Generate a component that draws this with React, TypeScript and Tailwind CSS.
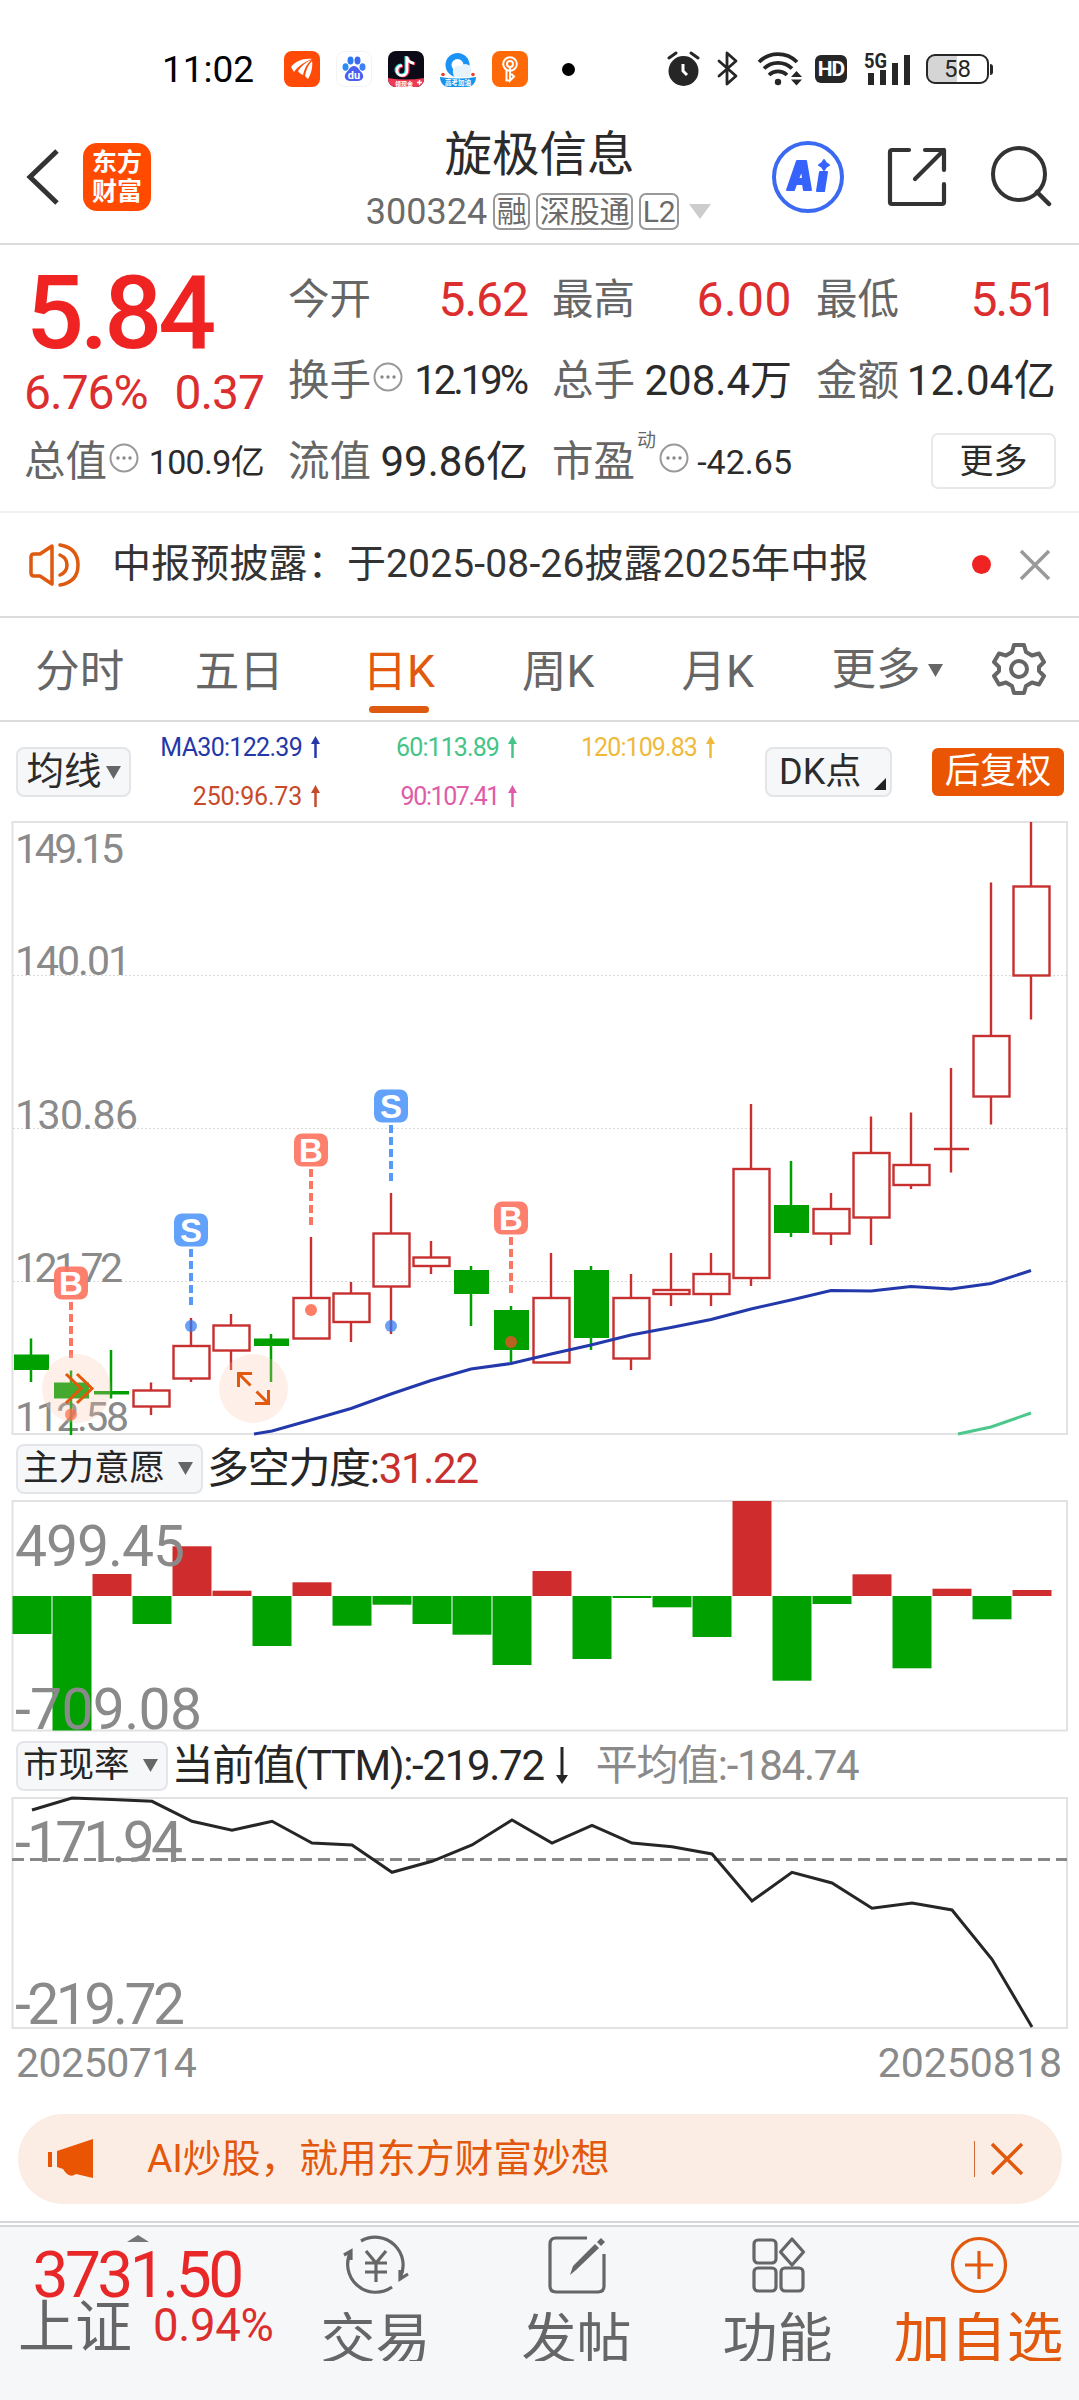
import type { ReactNode } from "react";

type Color = "r" | "g";

// [color, high, body top, body bottom, low]
type Candle = [Color, number, number, number, number];

const RED = "#c8302f";
const GREEN = "#00a000";

const candles: Candle[] = [
  ["g", 1338.5, 1354.5, 1370, 1382],
  ["g", 1370.5, 1382.5, 1398.5, 1435],
  ["g", 1350, 1391, 1394.5, 1398.5],
  ["r", 1382.5, 1390.5, 1406.5, 1415],
  ["r", 1318, 1346, 1378.5, 1382],
  ["r", 1314, 1325.5, 1350.5, 1370],
  ["g", 1334, 1338.5, 1346, 1382],
  ["r", 1237, 1298, 1338.5, 1338.5],
  ["r", 1282, 1293.5, 1322, 1342],
  ["r", 1193, 1233.5, 1286.5, 1334],
  ["r", 1241, 1257.5, 1266, 1274],
  ["g", 1266, 1270, 1294, 1326],
  ["g", 1306, 1310, 1350, 1362],
  ["r", 1253, 1298, 1362.5, 1362.5],
  ["g", 1266, 1270, 1338, 1350],
  ["r", 1274, 1298, 1358.5, 1370],
  ["r", 1253, 1290, 1294, 1306],
  ["r", 1253, 1274, 1294, 1306],
  ["r", 1104, 1169, 1278, 1286],
  ["g", 1161, 1205, 1233, 1237],
  ["r", 1193, 1209, 1233.5, 1245],
  ["r", 1116.5, 1153, 1217.5, 1245],
  ["r", 1112.5, 1165, 1185, 1189],
  ["r", 1068, 1149, 1149, 1172.5],
  ["r", 882.5, 1036, 1096.5, 1124.5],
  ["r", 822, 886.5, 975.5, 1019.5],
];

const bars: [Color, number][] = [
  ["g", 1634],
  ["g", 1730.5],
  ["r", 1574],
  ["g", 1624],
  ["r", 1546.3],
  ["r", 1590.7],
  ["g", 1646],
  ["r", 1582.3],
  ["g", 1625.7],
  ["g", 1604.7],
  ["g", 1624],
  ["g", 1634.7],
  ["g", 1665],
  ["r", 1571],
  ["g", 1659],
  ["g", 1598],
  ["g", 1607.3],
  ["g", 1637],
  ["r", 1501],
  ["g", 1680.7],
  ["g", 1604],
  ["r", 1574.3],
  ["g", 1668.3],
  ["r", 1588.7],
  ["g", 1619.3],
  ["r", 1590],
];

const ttm = [
  1810, 1798, 1799.5, 1801.3, 1821.3, 1830.3, 1821.3, 1843, 1845, 1872.3,
  1861.3, 1845, 1820, 1843, 1825.3, 1843, 1846.7, 1854, 1901, 1872.3, 1883,
  1908.3, 1903, 1910, 1959.3, 2027,
];

const ma30 =
  "254,1434 272,1431 311,1420 351,1408.5 391,1394 431,1380.5 471,1369 511,1363.5 551,1354 591,1345 631,1335 671,1327.5 711,1319.5 751,1309 791,1300 831,1290.5 871,1291 911,1286.5 951,1289 991,1283.5 1031,1270.5";

const signals = [
  { x: 71, y: 1283, type: "B", dot: 1414.5 },
  { x: 191, y: 1230, type: "S", dot: 1326 },
  { x: 311, y: 1150, type: "B", dot: 1310 },
  { x: 391, y: 1106, type: "S", dot: 1326 },
  { x: 511, y: 1218, type: "B", dot: 1342 },
];

const xAt = (i: number) => 31 + i * 40;

function AxisLabel({
  y,
  width,
  size,
  children,
}: {
  y: number;
  width: number;
  size: number;
  children: string;
}) {
  return (
    <text x="15" y={y} fontSize={size} textLength={width} fill="#8a8a8a">
      {children}
    </text>
  );
}

/* ---------- status bar ---------- */

function StatusBar() {
  return (
    <div className="flex h-[100px] items-center pl-[162px] pt-[38px]">
      <span className="w-[122px] text-[37px] leading-none text-black">11:02</span>
      <div className="flex gap-4">
        <svg width="36" height="36" viewBox="0 0 36 36">
          <rect width="36" height="36" rx="8" fill="#ff4a08" />
          <path d="M7 16C12 10 19 7 28 8c-6 2-14 7-18 13-1-2-2-3-3-5z" fill="#fff" />
          <path d="M14 20c3-5 8-9 13-11-4 4-7 9-8 15-2-1-4-2-5-4z" fill="#fff" />
          <path d="M21 25c1-6 3-11 7-15 1 6-1 13-4 18-1-1-2-2-3-3z" fill="#fff" />
        </svg>
        <svg width="36" height="36" viewBox="0 0 36 36">
          <rect x=".5" y=".5" width="35" height="35" rx="8" fill="#fff" stroke="#f3f3f3" />
          <ellipse cx="9.500" cy="16" rx="3" ry="3.800" fill="#2a8cf5" />
          <ellipse cx="14.500" cy="9.500" rx="3" ry="4" fill="#2a7af5" />
          <ellipse cx="21.500" cy="9.500" rx="3" ry="4" fill="#3f67f5" />
          <ellipse cx="26.500" cy="16" rx="3" ry="3.800" fill="#3d80f5" />
          <path d="M18 15c4 0 5 4 8 7 3 4 0 8-4 8H14c-4 0-7-4-4-8 3-3 4-7 8-7z" fill="#4a5ef0" />
          <text x="18" y="28" fontSize="11" fontWeight="700" textAnchor="middle" fill="#fff">
            du
          </text>
        </svg>
        <svg width="36" height="36" viewBox="0 0 36 36">
          <rect width="36" height="36" rx="8" fill="#0c0a16" />
          <path d="M18 5v14a5 5 0 1 1-5-5M18 6c1 4 3 5 7 6" fill="none" stroke="#28e0df" strokeWidth="3" />
          <path d="M20 6v14a5 5 0 1 1-5-5M20 7c1 4 3 5 7 6" fill="none" stroke="#f5345c" strokeWidth="3" />
          <path d="M19 5.500v14a5 5 0 1 1-5-5M19 6.500c1 4 3 5 7 6" fill="none" stroke="#fff" strokeWidth="2.600" />
          <path d="M0 27q18 3 36 0v1a8 8 0 0 1-8 8H8a8 8 0 0 1-8-8z" fill="#ee3a55" />
          <text x="16" y="34.500" fontSize="6" fontWeight="700" textAnchor="middle" fill="#fff">
            领现金
          </text>
          <path d="M31.500 29v5M29 31.500h5" stroke="#fff" strokeWidth="1.500" />
        </svg>
        <svg width="36" height="36" viewBox="0 0 36 36">
          <circle cx="17.500" cy="14" r="9" fill="none" stroke="#1b93f4" strokeWidth="6" />
          <path d="M13 22a6 6 0 0 1 8-7 6 6 0 0 1 10 6l-2 5H14z" fill="#e6f3fd" />
          <path d="M0 26q18 3 36 0c0 6-4 10-9 10H9c-5 0-9-4-9-10z" fill="#1593ec" />
          <circle cx="3" cy="23.500" r="1.800" fill="#e8412d" />
          <circle cx="33" cy="23.500" r="1.800" fill="#e8412d" />
          <text x="18" y="34" fontSize="6.500" fontWeight="700" textAnchor="middle" fill="#fff">
            高考加油
          </text>
        </svg>
        <svg width="36" height="36" viewBox="0 0 36 36">
          <rect width="36" height="36" rx="8" fill="#ff6a08" />
          <g fill="none" stroke="#fff" strokeWidth="2">
            <circle cx="18" cy="13" r="6.800" />
            <circle cx="18" cy="13" r="3" />
            <path d="M14.500 18.500V29.500h3M18 16v13.500l4-4-2-2h-2" />
          </g>
        </svg>
      </div>
      <span className="ml-[34px] size-[13px] rounded-full bg-black" />
      <div className="ml-[92px] flex items-center text-[#262626]">
        <svg width="33" height="36" viewBox="0 0 33 36">
          <circle cx="16.500" cy="20" r="15" fill="currentColor" />
          <path d="M2 7l7-5M31 7l-7-5" stroke="currentColor" strokeWidth="3" strokeLinecap="round" />
          <path d="M16 13v7l4 4" stroke="#fff" strokeWidth="3" fill="none" />
        </svg>
        <svg className="ml-[17px]" width="22" height="36" viewBox="0 0 22 36">
          <path
            d="M2 10l17 15-9 8V2l9 8L2 25"
            fill="none"
            stroke="currentColor"
            strokeWidth="2.800"
            strokeLinejoin="round"
            strokeLinecap="round"
          />
        </svg>
        <svg className="ml-[18px]" width="46" height="36" viewBox="0 0 46 36">
          <g fill="none" stroke="currentColor" strokeWidth="3.800">
            <path d="M2 11a27 27 0 0 1 38 0" />
            <path d="M7 17.500a20 20 0 0 1 28 0" />
            <path d="M12 24a13 13 0 0 1 18 0" />
          </g>
          <circle cx="21" cy="31" r="3.200" fill="currentColor" />
          <path d="M34 26l5.500-6 5.500 6zM34 28.500l5.500 6 5.500-6z" fill="currentColor" />
        </svg>
        <span className="ml-[12px] flex h-7 w-8 items-center justify-center rounded-md bg-[#262626] text-[21px] font-bold leading-none tracking-[-1px] text-white">
          HD
        </span>
        <svg className="ml-[17px]" width="48" height="36" viewBox="0 0 48 36">
          <text x="0" y="17" fontSize="20" fontWeight="700" textLength="23" lengthAdjust="spacingAndGlyphs" fill="currentColor">
            5G
          </text>
          <path d="M4 22h6v12H4zM16 19h6v15h-6zM28 12h6v22h-6zM40 4h6v30h-6z" fill="currentColor" />
        </svg>
        <div className="ml-[14px] flex items-center">
          <div className="flex h-[30px] w-[63px] items-center justify-center rounded-[9px] border-2 border-[#262626] bg-gradient-to-r from-[#d5d5d5] from-50% to-white to-50% text-[24px] leading-none">
            58
          </div>
          <span className="ml-px h-[11px] w-[3px] rounded-r bg-[#262626]" />
        </div>
      </div>
    </div>
  );
}

/* ---------- header ---------- */

function Badge({ children }: { children: string }) {
  return (
    <span className="flex h-[37px] shrink-0 items-center whitespace-nowrap rounded-[7px] border-2 border-[#999] px-[1.500px] text-[30px] leading-none">
      {children}
    </span>
  );
}

function Header() {
  return (
    <header className="flex h-[145px] items-center border-b-2 border-[#dcdcdc] pt-[11px]">
      <svg className="ml-[24px]" width="38" height="58" viewBox="0 0 38 58">
        <path d="M33 3L6 29l27 26" fill="none" stroke="#333" strokeWidth="5" />
      </svg>
      <div className="ml-[21px] flex size-[68px] flex-col items-center justify-center gap-[3px] rounded-[14px] bg-[#ff4a00] text-[25px] font-bold leading-[26px] text-white">
        <span>东方</span>
        <span>财富</span>
      </div>
      <div className="ml-[215px] flex w-[345px] flex-col items-center pt-[7px]">
        <h1 className="pl-[2px] text-[47.500px] leading-[49px] text-[#2b2b2b]">旋极信息</h1>
        <div className="mt-[13px] flex items-center gap-[6px] text-[#6b6b6b]">
          <span className="text-[36px] leading-none">300324</span>
          <Badge>融</Badge>
          <Badge>深股通</Badge>
          <Badge>L2</Badge>
          <svg className="ml-1" width="22" height="15" viewBox="0 0 22 15">
            <path d="M0 0h22L11 15z" fill="#ccc" />
          </svg>
        </div>
      </div>
      <svg className="ml-[60px]" width="74" height="74" viewBox="0 0 74 74">
        <circle cx="37" cy="37" r="34" fill="none" stroke="#3b69f2" strokeWidth="4" />
        <g fill="#3563fb" stroke="#3563fb" strokeWidth="2" strokeLinejoin="round">
          <path
            fillRule="evenodd"
            d="M16 50l10-29h9l5 29h-7l-1-6h-7l-2 6zM27 39h5l-1-10z"
          />
          <path d="M49 32h7l-3 19h-7zM53 20l2 3 3 2-3 2-2 3-2-3-3-2 3-2z" />
        </g>
      </svg>
      <svg className="ml-[42px]" width="60" height="60" viewBox="0 0 60 60">
        <path
          d="M22 3H5a2 2 0 0 0-2 2v50a2 2 0 0 0 2 2h50a2 2 0 0 0 2-2V37M38 3h19v20M57 3L28 32"
          fill="none"
          stroke="#333"
          strokeWidth="4.200"
          strokeLinecap="round"
          strokeLinejoin="round"
        />
      </svg>
      <svg className="ml-[43px]" width="62" height="62" viewBox="0 0 62 62">
        <circle cx="29" cy="28" r="26" fill="none" stroke="#333" strokeWidth="4" />
        <path d="M47 46l12 12" stroke="#333" strokeWidth="4.500" strokeLinecap="round" />
      </svg>
    </header>
  );
}

/* ---------- quote summary ---------- */

function Info() {
  return (
    <svg className="-mt-2 ml-[2px] shrink-0" width="30" height="30" viewBox="0 0 30 30">
      <circle cx="15" cy="15" r="13.500" fill="none" stroke="#999" strokeWidth="2" />
      <g fill="#888">
        <circle cx="9" cy="15" r="1.700" />
        <circle cx="15" cy="15" r="1.700" />
        <circle cx="21" cy="15" r="1.700" />
      </g>
    </svg>
  );
}

function Quote({ label, children }: { label: ReactNode; children: ReactNode }) {
  return (
    <div className="flex items-center justify-between whitespace-nowrap">
      <span className="flex items-center text-[41.5px] leading-none text-[#666]">{label}</span>
      {children}
    </div>
  );
}

function Summary() {
  return (
    <section className="grid h-[268px] grid-cols-[240px_240px_240px_240px] grid-rows-[81px_81px_81px] gap-x-[24px] border-b-2 border-[#efefef] pl-[24px] pt-[14px]">
      <div className="row-span-2 text-[#f02323]">
        <div className="pl-[2px] pt-[5px] text-[102px] font-medium leading-[98px] tracking-[-4px]">
          5.84
        </div>
        <div className="flex justify-between pt-[7px] text-[48px] leading-[48px] tracking-[-1px] text-[#dc2e2e]">
          <span>6.76%</span>
          <span>0.37</span>
        </div>
      </div>
      <Quote label="今开">
        <span className="text-[48px] leading-none tracking-[-1px] text-[#dc2e2e]">5.62</span>
      </Quote>
      <Quote label="最高">
        <span className="text-[48px] leading-none tracking-[0.500px] text-[#dc2e2e]">6.00</span>
      </Quote>
      <Quote label="最低">
        <span className="text-[48px] leading-none tracking-[-2px] text-[#dc2e2e]">5.51</span>
      </Quote>
      <Quote label={<>换手<Info /></>}>
        <span className="pr-[2px] text-[40px] leading-none tracking-[-3px] text-[#2b2b2b]">12.19%</span>
      </Quote>
      <Quote label="总手">
        <span className="text-[42px] leading-none text-[#2b2b2b]">208.4万</span>
      </Quote>
      <Quote label="金额">
        <span className="text-[42px] leading-none tracking-[0.300px] text-[#2b2b2b]">12.04亿</span>
      </Quote>
      <Quote label={<>总值<Info /></>}>
        <span className="text-[34px] leading-none tracking-[-0.700px] text-[#2b2b2b]">100.9亿</span>
      </Quote>
      <Quote label="流值">
        <span className="text-[42px] leading-none text-[#2b2b2b]">99.86亿</span>
      </Quote>
      <Quote
        label={
          <>
            市盈<span className="-mt-[42px] ml-[2px] mr-px text-[19px]">动</span>
            <Info />
          </>
        }
      >
        <span className="text-[34px] leading-none text-[#2b2b2b]">-42.65</span>
      </Quote>
      <div className="flex items-center justify-end">
        <button className="-mt-[2px] h-[56px] w-[125px] rounded-[7px] border-2 border-[#e8e8e8] text-[34px] leading-none text-[#2b2b2b]">
          更多
        </button>
      </div>
    </section>
  );
}

function Notice() {
  return (
    <div className="flex h-[105px] items-center border-b-2 border-[#dcdcdc] pl-[28px]">
      <svg width="56" height="48" viewBox="0 0 56 48" fill="none" stroke="#dd5a10" strokeWidth="3.500">
        <path d="M24 5L12 13H6q-3 0-3 3v16q0 3 3 3h6l12 8z" strokeLinejoin="round" />
        <path d="M32 14q7 3 7 10t-7 10M32 4q18 3 18 20T32 44" strokeLinecap="round" />
      </svg>
      <span className="ml-[28px] w-[860px] text-[39px] leading-none tracking-[0.150px] text-[#333]">
        中报预披露：于2025-08-26披露2025年中报
      </span>
      <span className="size-[19px] rounded-full bg-[#f02323]" />
      <svg className="ml-[28px]" width="32" height="32" viewBox="0 0 32 32">
        <path d="M2 2l28 28M30 2L2 30" stroke="#999" strokeWidth="3.500" />
      </svg>
    </div>
  );
}

/* ---------- tabs & toolbar ---------- */

const tabs = ["分时", "五日", "日K", "周K", "月K"];

function Caret() {
  return (
    <svg width="15" height="13" viewBox="0 0 15 13">
      <path d="M0 0h15L7.500 13z" fill="#666" />
    </svg>
  );
}

function Tabs() {
  return (
    <nav className="flex h-[104px] border-b-2 border-[#dcdcdc] text-[44.500px] leading-none text-[#666]">
      {tabs.map((tab) => (
        <div
          key={tab}
          className={
            tab === "日K"
              ? "flex w-[159.500px] flex-col items-center pt-[32px] text-[#e2580c]"
              : "flex w-[159.500px] flex-col items-center pt-[32px]"
          }
        >
          {tab}
          {tab === "日K" && <span className="mt-[11px] h-[7px] w-[60px] rounded-full bg-[#dd5a10]" />}
        </div>
      ))}
      <div className="ml-[34px] flex items-center gap-[7px] pt-[3px]">
        更多
        <Caret />
      </div>
      <svg className="ml-[49px] mt-[24px]" width="54" height="54" viewBox="0 0 54 54" fill="none" stroke="#666" strokeWidth="4">
        <path
          d="M22 3h10l2 7 6 3.500 7-2 5 8.500-5 5v4l5 5-5 8.500-7-2-6 3.500-2 7H22l-2-7-6-3.500-7 2L2 34l5-5v-4l-5-5 5-8.500 7 2 6-3.500z"
          strokeLinejoin="round"
        />
        <circle cx="27" cy="27" r="8" />
      </svg>
    </nav>
  );
}

function Average({ className, children }: { className: string; children: string }) {
  return (
    <span className={`flex items-center justify-end gap-[9px] ${className}`}>
      {children}
      <svg width="9" height="22" viewBox="0 0 9 22">
        <path d="M4.500 22V5" stroke="currentColor" strokeWidth="2.500" />
        <path d="M0 8L4.500 0 9 8z" fill="currentColor" />
      </svg>
    </span>
  );
}

function Toolbar() {
  return (
    <div className="flex h-[94px] pl-[16px]">
      <button className="mt-[25px] flex h-[50px] w-[115px] shrink-0 items-center justify-center gap-[4px] rounded-[8px] border-2 border-[#e3e5e9] bg-[#f6f7f9] text-[37.500px] leading-none text-[#2b2b2b]">
        均线
        <Caret />
      </button>
      <div className="ml-[-9px] mt-[12px] grid h-[74px] grid-cols-[198px_197px_198px] grid-rows-[26px_26px] content-start gap-y-[23px] text-[25px] leading-none">
        <Average className="tracking-[-0.700px] text-[#2438a8]">MA30:122.39</Average>
        <Average className="tracking-[-0.900px] text-[#45c487]">60:113.89</Average>
        <Average className="tracking-[-0.900px] text-[#efb93c]">120:109.83</Average>
        <Average className="tracking-[-0.200px] text-[#c84a2b]">250:96.73</Average>
        <Average className="tracking-[-1.400px] text-[#e05ca8]">90:107.41</Average>
      </div>
      <button className="ml-[50px] mt-[25px] flex h-[50px] w-[127px] items-end justify-between rounded-[8px] border-2 border-[#e3e5e9] bg-[#f6f7f9] pb-[5px] pl-[12px] pr-[4px] text-[36px] leading-none text-[#2b2b2b]">
        DK点
        <svg width="12" height="12" viewBox="0 0 12 12">
          <path d="M12 0v12H0z" fill="#222" />
        </svg>
      </button>
      <button className="ml-[40px] mt-[26px] h-[48px] w-[132px] rounded-[6px] bg-[#ea5504] text-[35.500px] leading-none text-white">
        后复权
      </button>
    </div>
  );
}

/* ---------- charts ---------- */

function CandleChart() {
  return (
    <svg className="block" width="1079" height="622" viewBox="0 816 1079 622">
      <rect x="12.500" y="822" width="1054.500" height="612" fill="none" stroke="#e2e2e2" strokeWidth="2" />
      {[975.5, 1128.5, 1281.5].map((y) => (
        <path key={y} d={`M13 ${y}H1067`} stroke="#d8d8d8" strokeDasharray="2 2" />
      ))}
      <AxisLabel y={863} width={109} size={41}>149.15</AxisLabel>
      <AxisLabel y={975} width={116} size={41}>140.01</AxisLabel>
      <AxisLabel y={1128.5} width={123} size={41}>130.86</AxisLabel>
      <AxisLabel y={1282} width={108} size={41}>121.72</AxisLabel>
      <AxisLabel y={1431} width={114} size={41}>112.58</AxisLabel>

      {candles.map(([color, high, top, bottom, low], i) => {
        const x = xAt(i);
        if (color === "g") {
          return (
            <g key={i} fill={GREEN}>
              <rect x={x - 1.25} y={high} width="2.500" height={low - high} />
              <rect x={x - 17} y={top} width="35" height={bottom - top} />
            </g>
          );
        }
        return (
          <g key={i} fill="none" stroke={RED} strokeWidth="2.400">
            <path d={`M${x} ${high}V${top}M${x} ${bottom}V${low}`} />
            {top === bottom ? (
              <path d={`M${x - 17} ${top}h35`} />
            ) : (
              <rect x={x - 17.5} y={top} width="36" height={bottom - top} />
            )}
          </g>
        );
      })}

      <polyline points={ma30} fill="none" stroke="#2339ab" strokeWidth="3" />
      <polyline points="958,1434 991,1427 1031,1413" fill="none" stroke="#4cc88c" strokeWidth="3" />

      {signals.map(({ x, y, type, dot }) => {
        const fill = type === "B" ? "#fd7563" : "#559afa";
        return (
          <g key={x}>
            <rect x={x - 17} y={y - 16.5} width="34" height="33" rx="8" fill={fill} fillOpacity=".92" />
            <text
              x={x}
              y={y + 12}
              fontSize="33"
              fontWeight="700"
              textAnchor="middle"
              fill="#fff"
              style={{ fontFamily: "Liberation Sans, sans-serif" }}
            >
              {type}
            </text>
            <path d={`M${x} ${y + 19}v56`} stroke={fill} strokeWidth="4" strokeDasharray="8 4" />
            <circle cx={x} cy={dot} r="6" fill={type === "B" ? "#ff4a2d" : "#2d7df5"} fillOpacity=".72" />
          </g>
        );
      })}

      <g stroke="#e2580c" strokeWidth="3" fill="none">
        <circle cx="76.500" cy="1388.500" r="34.500" fill="#fbc9ae" fillOpacity=".27" stroke="none" />
        <path d="M66 1374l15 14.500L66 1403M77 1374l15 14.500L77 1403" />
        <circle cx="253.500" cy="1388.500" r="34.500" fill="#fbc9ae" fillOpacity=".27" stroke="none" />
        <path d="M238.500 1387v-13.500H252M238.500 1373.500l12 12M268.500 1390v13.500H255M268.500 1403.500l-12-12" />
      </g>
    </svg>
  );
}

function ForceChart() {
  const zero = 1596;
  return (
    <svg className="block" width="1079" height="236" viewBox="0 1498 1079 236">
      <rect x="12.500" y="1501" width="1054.500" height="229.500" fill="none" stroke="#e2e2e2" strokeWidth="2" />
      {bars.map(([color, y], i) => (
        <rect
          key={i}
          x={12.5 + i * 40}
          y={Math.min(zero, y)}
          width="39"
          height={Math.abs(y - zero)}
          fill={color === "r" ? "#cf2d2d" : GREEN}
        />
      ))}
      <AxisLabel y={1565.5} width={170} size={57}>499.45</AxisLabel>
      <AxisLabel y={1729} width={187} size={57}>-709.08</AxisLabel>
    </svg>
  );
}

function TtmChart() {
  return (
    <svg className="block" width="1079" height="236" viewBox="0 1796 1079 236">
      <rect x="12.500" y="1798" width="1054.500" height="230" fill="none" stroke="#e2e2e2" strokeWidth="2" />
      <AxisLabel y={1862} width={168} size={57}>-171.94</AxisLabel>
      <AxisLabel y={2024} width={170} size={57}>-219.72</AxisLabel>
      <path d="M12 1859.500H1067" stroke="#888" strokeWidth="3" strokeDasharray="12 6" />
      <polyline
        points={ttm.map((y, i) => `${xAt(i) + 1},${y}`).join(" ")}
        fill="none"
        stroke="#262626"
        strokeWidth="3"
      />
    </svg>
  );
}

function IndicatorRow({ name, children }: { name: string; children: ReactNode }) {
  return (
    <div className="flex items-center whitespace-nowrap pl-[16px] pt-px text-[42px] leading-none tracking-[-1.300px] text-[#262626]">
      <button className="mr-[4px] flex h-[50px] items-center gap-[13px] rounded-[8px] border-2 border-[#e3e5e9] bg-[#f6f7f9] pl-[5px] pr-[8px] text-[35.500px] leading-none tracking-normal">
        {name}
        <Caret />
      </button>
      {children}
    </div>
  );
}

/* ---------- promo & bottom navigation ---------- */

function Promo() {
  return (
    <div className="ml-[18px] mr-[17px] mt-5 flex h-[90px] items-center rounded-full bg-[#fcede4] pl-[29px] text-[#e2580c]">
      <svg width="48" height="40" viewBox="0 0 48 40" fill="#ea5504">
        <path d="M1 13h4v15H1zM10 12L46 0v39l-17-4q-7 5-13-5l-6-2z" />
      </svg>
      <span className="ml-[52px] w-[827px] text-[38.800px] leading-none">
        AI炒股，就用东方财富妙想
      </span>
      <span className="h-9 w-px bg-[#cf6a35]" />
      <svg className="ml-[15px]" width="34" height="34" viewBox="0 0 34 34">
        <path d="M2 2l30 30M32 2L2 32" stroke="#e2580c" strokeWidth="3.500" />
      </svg>
    </div>
  );
}

function NavItem({ icon, label, active }: { icon: ReactNode; label: string; active?: boolean }) {
  return (
    <div
      className={
        active
          ? "flex w-[201px] shrink-0 flex-col items-center pt-[7px] text-[56.500px] text-[#e2580c]"
          : "flex w-[201px] shrink-0 flex-col items-center pt-[7px] text-[55px] text-[#666]"
      }
    >
      <svg width="68" height="62" viewBox="0 0 68 62" fill="none" stroke="currentColor" strokeWidth="3.200">
        {icon}
      </svg>
      {/* label overflows its box and is cut at the bottom */}
      <span className="mt-[16px] h-[49px] overflow-hidden whitespace-nowrap leading-[55px]">
        {label}
      </span>
    </div>
  );
}

function BottomNav() {
  return (
    <div className="mt-[17px] border-t-2 border-[#d6d6da] pt-[2px]">
      <div className="flex h-[176px] border-t-2 border-[#d6d6da] bg-[#f6f7f9]">
        <div className="flex w-[275px] shrink-0 flex-col items-center">
          <svg className="mt-[8px] shrink-0" width="22" height="7" viewBox="0 0 22 7">
            <path d="M11 0l11 7H0z" fill="#777" />
          </svg>
          <span className="mt-[4px] pr-[2px] text-[64px] leading-[60px] tracking-[-3.500px] text-[#e82828]">
            3731.50
          </span>
          <div className="-mt-[6px] flex w-full items-center whitespace-nowrap pl-[18px]">
            <span className="text-[57px] leading-[56px] text-[#666]">上证</span>
            <span className="-mt-[5px] ml-[21px] text-[45.500px] leading-none tracking-[-0.300px] text-[#dc2e2e]">
              0.94%
            </span>
          </div>
        </div>
        <NavItem
          label="交易"
          icon={
            <>
              <path d="M19 7a28 28 0 0 1 39 37M50 53A28 28 0 0 1 9 17M2 21l7-4v9M66 40l-8 5v-9" />
              <path d="M24 17l10 12 10-12M34 29v19M23 29h22M23 38h22" />
            </>
          }
        />
        <NavItem
          label="发帖"
          icon={
            <>
              <path d="M44 4H13q-6 0-6 6v42q0 6 6 6h42q6 0 6-6V20" />
              <path d="M27 41l3-9 22-22 4 4-23 22zM54 8l4-4 4 4-4 4z" fill="currentColor" stroke="none" />
            </>
          }
        />
        <NavItem
          label="功能"
          icon={
            <>
              <rect x="10" y="6" width="22" height="23" rx="4" />
              <rect x="10" y="34" width="22" height="23" rx="4" />
              <rect x="37" y="34" width="22" height="23" rx="4" />
              <path d="M48 5l11.500 13L48 31 36.500 18z" strokeLinejoin="round" />
            </>
          }
        />
        <NavItem
          active
          label="加自选"
          icon={
            <>
              <circle cx="34" cy="31" r="26.500" />
              <path d="M34 17v28M20 31h28" />
            </>
          }
        />
      </div>
    </div>
  );
}

export default function App() {
  return (
    <div className="h-[2400px] w-[1079px] overflow-hidden bg-white font-[Roboto,'Noto_Sans_CJK_SC',sans-serif]">
      <StatusBar />
      <Header />
      <Summary />
      <Notice />
      <Tabs />
      <Toolbar />
      <CandleChart />
      <div className="flex h-[60px]">
        <IndicatorRow name="主力意愿">
          多空力度:<span className="text-[#c8302f]">31.22</span>
        </IndicatorRow>
      </div>
      <ForceChart />
      <div className="flex h-[62px]">
        <IndicatorRow name="市现率">
          当前值(TTM):-219.72
          <svg className="ml-[12px] mr-[28px]" width="12" height="37" viewBox="0 0 12 37">
            <path d="M6 0v30" stroke="#262626" strokeWidth="3" />
            <path d="M0 28h12L6 37z" fill="#262626" />
          </svg>
          <span className="text-[#8a8a8a]">平均值:-184.74</span>
        </IndicatorRow>
      </div>
      <TtmChart />
      <div className="flex h-[62px] items-center justify-between pl-[16px] pr-[17px] text-[41px] leading-none text-[#8a8a8a]">
        <span className="tracking-[-0.500px]">20250714</span>
        <span>20250818</span>
      </div>
      <Promo />
      <BottomNav />
    </div>
  );
}
